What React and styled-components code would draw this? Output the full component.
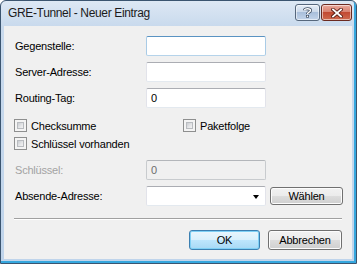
import React from 'react';
import styled, { createGlobalStyle } from 'styled-components';

const GlobalStyle = createGlobalStyle`
  html, body {
    margin: 0;
    padding: 0;
    background: #ffffff;
  }
  body {
    font-family: "Liberation Sans", Arial, sans-serif;
  }
`;

const Window = styled.div`
  width: 357px;
  height: 264px;
  box-sizing: border-box;
  display: flex;
  flex-direction: column;
  border: 1px solid #3b5570;
  border-radius: 6px 6px 0 0;
  background: linear-gradient(to bottom, #dde8f4 0px, #c9daed 25px, #bfd4eb 100%);
  box-shadow: inset -2px -2px 0 #35a7de;
  overflow: hidden;
`;

const TitleBar = styled.div`
  height: 25px;
  flex: none;
  display: flex;
  align-items: flex-start;
  justify-content: space-between;
`;

const Title = styled.div`
  padding: 5px 0 0 7px;
  font-size: 12px;
  letter-spacing: -0.35px;
  color: #1b1b1b;
`;

const CaptionButtons = styled.div`
  display: flex;
  gap: 1px;
  margin: 3px 4px 0 0;
`;

const CaptionButton = styled.div`
  width: ${p => p.$w}px;
  height: 17px;
  box-sizing: border-box;
  border: 1px solid ${p => (p.$close ? '#6b2a20' : '#56677c')};
  border-radius: 3px;
  display: flex;
  align-items: center;
  justify-content: center;
  background: ${p =>
    p.$close
      ? 'linear-gradient(to bottom, #e9a99c 0%, #d88271 45%, #c24a33 50%, #cf6a4f 100%)'
      : 'linear-gradient(to bottom, #e6eef7 0%, #cbd9ea 45%, #a9bfdb 50%, #c2d4ea 100%)'};
  box-shadow: inset 0 0 0 1px rgba(255, 255, 255, 0.55);
`;

const ClientArea = styled.div`
  flex: 1;
  margin: 0 4px 4px 3px;
  background: #f0f0f0;
  padding: 10px 10px 0 11px;
  display: flex;
  flex-direction: column;
  font-size: 11px;
  letter-spacing: -0.2px;
  color: #000;
`;

const FieldRow = styled.div`
  display: grid;
  grid-template-columns: 131px 120px auto;
  align-items: center;
  height: 20px;
  margin-top: ${p => p.$top || 0}px;
`;

const Label = styled.div`
  color: ${p => (p.$disabled ? '#a3a3a3' : '#000')};
`;

const Input = styled.div`
  height: 20px;
  box-sizing: border-box;
  border: 1px solid;
  border-color: ${p =>
    p.$focus
      ? '#5a93c2 #a9cbe6 #b5d3ea #a9cbe6'
      : p.$disabled
      ? '#b3b6ba #c8cbce #c8cbce #c8cbce'
      : '#abadb3 #e2e3ea #e3e9ef #e2e3ea'};
  border-radius: 2px;
  background: ${p => (p.$disabled ? '#f0f0f0' : '#ffffff')};
  color: ${p => (p.$disabled ? '#6d6d6d' : '#000')};
  display: flex;
  align-items: center;
  padding: 0 4px;
  position: relative;
`;

const Arrow = styled.div`
  position: absolute;
  right: 6px;
  top: 8px;
  width: 0;
  height: 0;
  border-left: 3.5px solid transparent;
  border-right: 3.5px solid transparent;
  border-top: 4px solid #000;
`;

const CheckGrid = styled.div`
  display: grid;
  grid-template-columns: 169px auto;
  row-gap: 5px;
  margin: 11px 0 0 -1px;
`;

const CheckItem = styled.label`
  display: flex;
  align-items: center;
  height: 13px;
  gap: 4px;
`;

const CheckBox = styled.span`
  width: 13px;
  height: 13px;
  box-sizing: border-box;
  border: 1px solid #8e8f8f;
  background: #f4f4f4;
  padding: 2px;
  &::after {
    content: '';
    display: block;
    width: 100%;
    height: 100%;
    box-sizing: border-box;
    border: 1px solid #b9bcc0;
    background: linear-gradient(135deg, #c9ccd1 0%, #e6e7e9 60%, #f2f2f2 100%);
  }
`;

const Button = styled.div`
  width: ${p => p.$w}px;
  height: ${p => p.$h || 20}px;
  box-sizing: border-box;
  border: 1px solid ${p => (p.$default ? '#3c7fb1' : '#707070')};
  border-radius: 3px;
  background: ${p =>
    p.$default
      ? 'linear-gradient(to bottom, #eaf6fd 0%, #d9f0fc 50%, #bee6fd 50%, #a7d9f5 100%)'
      : 'linear-gradient(to bottom, #f2f2f2 0%, #ebebeb 50%, #dddddd 50%, #cfcfcf 100%)'};
  box-shadow: inset 0 0 0 1px ${p => (p.$default ? '#7fd0f5' : '#fcfcfc')};
  display: flex;
  align-items: center;
  justify-content: center;
  font-size: 11px;
  color: #000;
  margin-left: ${p => p.$ml || 0}px;
`;

const Separator = styled.div`
  height: 1px;
  background: #a0a0a0;
  border-bottom: 1px solid #ffffff;
  margin: 12px 0 0 -1px;
`;

const ButtonBar = styled.div`
  display: flex;
  justify-content: flex-end;
  gap: 8px;
  margin-top: 10px;
`;

const HelpIcon = () => (
  <svg width="9" height="11" viewBox="0 0 9 11">
    <path
      d="M1.5 3.2 C1.5 1.2 7.5 1.2 7.5 3.4 C7.5 5.2 4.5 5.2 4.5 7"
      fill="none"
      stroke="#3e4c5e"
      strokeWidth="3"
    />
    <rect x="3" y="8" width="3" height="2.6" fill="#3e4c5e" />
    <path
      d="M1.5 3.2 C1.5 1.2 7.5 1.2 7.5 3.4 C7.5 5.2 4.5 5.2 4.5 7"
      fill="none"
      stroke="#ffffff"
      strokeWidth="1.4"
    />
    <rect x="3.8" y="8.6" width="1.4" height="1.4" fill="#ffffff" />
  </svg>
);

const CloseIcon = () => (
  <svg width="12" height="10" viewBox="0 0 12 10">
    <path d="M2 1.5 L10 8.5 M10 1.5 L2 8.5" stroke="#5a1e16" strokeWidth="3.6" strokeLinecap="square" />
    <path d="M2 1.5 L10 8.5 M10 1.5 L2 8.5" stroke="#ffffff" strokeWidth="1.8" strokeLinecap="square" />
  </svg>
);

const Check = ({ children }) => (
  <CheckItem>
    <CheckBox />
    {children}
  </CheckItem>
);

export default function App() {
  return (
    <>
      <GlobalStyle />
      <Window>
        <TitleBar>
          <Title>GRE-Tunnel - Neuer Eintrag</Title>
          <CaptionButtons>
            <CaptionButton $w={25}>
              <HelpIcon />
            </CaptionButton>
            <CaptionButton $w={31} $close>
              <CloseIcon />
            </CaptionButton>
          </CaptionButtons>
        </TitleBar>
        <ClientArea>
          <FieldRow>
            <Label>Gegenstelle:</Label>
            <Input $focus />
          </FieldRow>
          <FieldRow $top={6}>
            <Label>Server-Adresse:</Label>
            <Input />
          </FieldRow>
          <FieldRow $top={6}>
            <Label>Routing-Tag:</Label>
            <Input>0</Input>
          </FieldRow>
          <CheckGrid>
            <Check>Checksumme</Check>
            <Check>Paketfolge</Check>
            <Check>Schlüssel vorhanden</Check>
          </CheckGrid>
          <FieldRow $top={10}>
            <Label $disabled>Schlüssel:</Label>
            <Input $disabled>0</Input>
          </FieldRow>
          <FieldRow $top={6}>
            <Label>Absende-Adresse:</Label>
            <Input>
              <Arrow />
            </Input>
            <Button $w={73} $h={18} $ml={4}>Wählen</Button>
          </FieldRow>
          <Separator />
          <ButtonBar>
            <Button $w={71} $default>OK</Button>
            <Button $w={74}>Abbrechen</Button>
          </ButtonBar>
        </ClientArea>
      </Window>
    </>
  );
}
